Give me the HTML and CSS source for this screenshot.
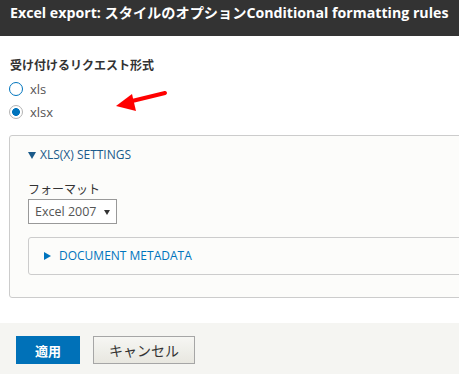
FILE: index.html
```html
<!DOCTYPE html>
<html lang="ja">
<head>
  <meta charset="UTF-8">
  <title>Excel export</title>
  <link rel="stylesheet" href="styles.css">
</head>
<body>
  <div class="dialog">
    <div class="dialog-title">Excel export: スタイルのオプションConditional formatting rules</div>

    <div class="dialog-body">
      <div class="form-label">受け付けるリクエスト形式</div>
      <label class="radio-row"><span class="radio"></span>xls</label>
      <label class="radio-row"><span class="radio checked"></span>xlsx</label>

      <div class="fieldset">
        <div class="summary open"><span class="tri-down"></span>XLS(X) SETTINGS</div>
        <div class="field-label">フォーマット</div>
        <div class="select">Excel 2007 <span class="caret"></span></div>

        <div class="fieldset inner">
          <div class="summary"><span class="tri-right"></span>DOCUMENT METADATA</div>
        </div>
      </div>

      <svg class="arrow" width="70" height="30" viewBox="0 0 70 30">
        <line x1="65" y1="8" x2="28" y2="17" stroke="#f00" stroke-width="4" stroke-linecap="round"/>
        <polygon points="16,21 32,9 36,26" fill="#f00"/>
      </svg>
    </div>

    <div class="dialog-footer">
      <button class="btn btn-primary">適用</button>
      <button class="btn">キャンセル</button>
    </div>
  </div>
</body>
</html>
```

FILE: styles.css
```css
html, body {
  margin: 0;
  padding: 0;
  overflow: hidden;
}

body {
  width: 459px;
  height: 374px;
  font-family: "Open Sans", "Noto Sans CJK JP", sans-serif;
  color: #333;
  background: #fff;
}

.dialog-title {
  height: 36px;
  box-sizing: border-box;
  padding: 0 0 10px 10px;
  line-height: 26px;
  font-size: 14.2px;
  font-weight: bold;
  color: #fff;
  background: #333;
  white-space: nowrap;
}

.dialog-body {
  position: relative;
  height: 287px;
  padding: 22px 0 0 9px;
  box-sizing: border-box;
}

.form-label {
  font-size: 12px;
  font-weight: bold;
  line-height: 16px;
  padding-left: 1px;
  margin-bottom: 3px;
}

.radio-row {
  display: flex;
  align-items: center;
  gap: 7px;
  height: 23px;
  font-size: 13px;
  color: #555;
}

.radio {
  width: 14px;
  height: 14px;
  box-sizing: border-box;
  border: 1.5px solid #0074bd;
  border-radius: 50%;
  background: #fff;
}

.radio.checked {
  border: 1px solid #b3b3b3;
  background: radial-gradient(circle, #0074bd 0 3.6px, #fff 4.2px);
}

.fieldset {
  margin: 12px -30px 0 0;
  padding: 11px 0 22px 18px;
  border: 1px solid #ccc;
  border-radius: 3px;
  background: #fcfcfa;
}

.fieldset.inner {
  margin-top: 13px;
  padding: 10px 0 10px 15px;
}

.summary {
  display: flex;
  align-items: center;
  font-size: 12px;
  line-height: 16px;
  color: #0074bd;
}

.summary.open {
  color: #1a5a8a;
}

.tri-down {
  border-left: 4px solid transparent;
  border-right: 4px solid transparent;
  border-top: 7px solid currentColor;
  margin-right: 4px;
}

.tri-right {
  border-top: 4px solid transparent;
  border-bottom: 4px solid transparent;
  border-left: 7px solid currentColor;
  margin-right: 8px;
}

.field-label {
  margin-top: 19px;
  font-size: 12px;
  line-height: 16px;
}

.select {
  display: inline-flex;
  align-items: center;
  margin-top: 1px;
  height: 25px;
  box-sizing: border-box;
  padding: 0 6px 0 6px;
  border: 1px solid #999;
  background: #fff;
  font-size: 12.5px;
  color: #555;
}

.caret {
  margin-left: 7px;
  border-left: 3px solid transparent;
  border-right: 3px solid transparent;
  border-top: 5px solid #333;
  margin-top: 2px;
}

.arrow {
  position: absolute;
  left: 100px;
  top: 49px;
}

.dialog-footer {
  height: 51px;
  box-sizing: border-box;
  padding: 13px 0 0 16px;
  background: #f5f5f2;
  display: flex;
  gap: 13px;
  align-items: flex-start;
}

.btn {
  height: 28px;
  width: 102px;
  border: 1px solid #a6a6a6;
  background: linear-gradient(#f6f6f3, #e8e7e0);
  font-family: "Noto Sans CJK JP", sans-serif;
  font-size: 14px;
  color: #333;
  padding: 0;
}

.btn-primary {
  width: 64px;
  border-color: #0071b8;
  background: #0071b8;
  color: #fff;
  font-size: 13px;
  font-weight: bold;
}
```
